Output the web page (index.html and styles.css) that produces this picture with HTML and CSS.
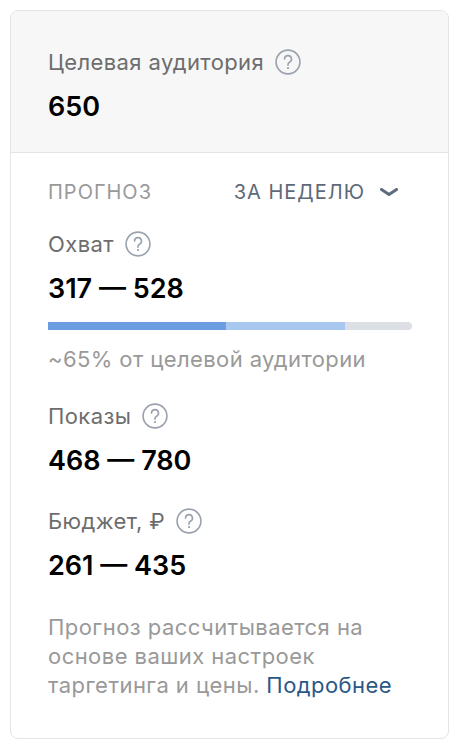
FILE: index.html
```html
<!DOCTYPE html>
<html lang="ru">
<head>
<meta charset="utf-8">
<link rel="stylesheet" href="styles.css">
</head>
<body>
<div class="card">
  <div class="head">
    <div class="label">Целевая аудитория <svg class="q" viewBox="0 0 24 24"><circle cx="12" cy="12" r="11"/><path d="M8.8 9.3a3.2 3.2 0 1 1 4.6 2.9c-.9.5-1.4 1.1-1.4 2v.8"/><circle class="dot" cx="12" cy="17.6" r="1"/></svg></div>
    <div class="value">650</div>
  </div>
  <div class="body">
    <div class="bar-head">
      <span class="caps">Прогноз</span>
      <span class="period">За неделю <svg class="chev" viewBox="0 0 18 8"><path d="M1.5 1.5L9 6.5L16.5 1.5"/></svg></span>
    </div>
    <div class="metric">
      <div class="label">Охват <svg class="q" viewBox="0 0 24 24"><circle cx="12" cy="12" r="11"/><path d="M8.8 9.3a3.2 3.2 0 1 1 4.6 2.9c-.9.5-1.4 1.1-1.4 2v.8"/><circle class="dot" cx="12" cy="17.6" r="1"/></svg></div>
      <div class="value">317 — 528</div>
      <div class="progress">
        <div class="seg seg-dark" style="width:48.9%"></div>
        <div class="seg seg-light" style="width:32.7%"></div>
      </div>
      <div class="note">~65% от целевой аудитории</div>
    </div>
    <div class="metric">
      <div class="label">Показы <svg class="q" viewBox="0 0 24 24"><circle cx="12" cy="12" r="11"/><path d="M8.8 9.3a3.2 3.2 0 1 1 4.6 2.9c-.9.5-1.4 1.1-1.4 2v.8"/><circle class="dot" cx="12" cy="17.6" r="1"/></svg></div>
      <div class="value">468 — 780</div>
    </div>
    <div class="metric metric-last">
      <div class="label">Бюджет, ₽ <svg class="q" viewBox="0 0 24 24"><circle cx="12" cy="12" r="11"/><path d="M8.8 9.3a3.2 3.2 0 1 1 4.6 2.9c-.9.5-1.4 1.1-1.4 2v.8"/><circle class="dot" cx="12" cy="17.6" r="1"/></svg></div>
      <div class="value">261 — 435</div>
    </div>
    <p class="foot">Прогноз рассчитывается на основе ваших настроек таргетинга и цены. <a href="#">Подробнее</a></p>
  </div>
</div>
</body>
</html>
```

FILE: styles.css
```css
* { box-sizing: border-box; }
html, body { margin: 0; padding: 0; background: #fff; }
body {
  font-family: Inter, "Noto Sans", sans-serif;
  color: #000;
  padding: 10px 1px 0 10px;
}
.card {
  width: 439px;
  border: 1px solid #e3e4e8;
  border-radius: 8px;
  overflow: hidden;
}
.head {
  background: #f7f7f7;
  border-bottom: 1px solid #e3e4e8;
  padding: 37px 36px 28px 37px;
}
.label {
  display: flex;
  align-items: center;
  gap: 11px;
  font-size: 22px;
  line-height: 28px;
  letter-spacing: 0.4px;
  color: #6d6d6d;
}
.q {
  width: 26px;
  height: 26px;
  fill: none;
  stroke: #99a2ad;
  stroke-width: 1.5;
  stroke-linecap: round;
}
.q .dot { fill: #99a2ad; stroke: none; }
.value {
  margin-top: 14px;
  font-size: 27px;
  line-height: 34px;
  font-weight: 600;
  color: #000;
}
.body {
  padding: 27px 36px 38px 37px;
}
.bar-head {
  display: flex;
  align-items: center;
  justify-content: space-between;
  text-transform: uppercase;
  font-size: 20px;
  line-height: 24px;
  letter-spacing: 1px;
  margin-bottom: 26px;
}
.caps { color: #999; }
.period {
  display: flex;
  align-items: center;
  gap: 15px;
  color: #5d6a7a;
  margin-right: 14px;
}
.chev {
  width: 18px;
  height: 8px;
  fill: none;
  stroke: #5d6b7d;
  stroke-width: 3;
  stroke-linecap: round;
  stroke-linejoin: round;
}
.metric { margin-bottom: 29px; }
.metric-last { margin-bottom: 30px; }
.progress {
  display: flex;
  height: 8px;
  margin-top: 16px;
  background: #dcdfe3;
  border-radius: 0 4px 4px 0;
  overflow: hidden;
}
.seg-dark { background: #6b9de0; }
.seg-light { background: #a9c8f0; }
.note {
  margin: 15px 0 1px;
  font-size: 22px;
  line-height: 28px;
  letter-spacing: 0.4px;
  color: #999;
}
.foot {
  margin: 0;
  font-size: 22px;
  line-height: 29px;
  letter-spacing: 0.45px;
  color: #999;
}
.foot a { color: #2a5885; text-decoration: none; }
```
